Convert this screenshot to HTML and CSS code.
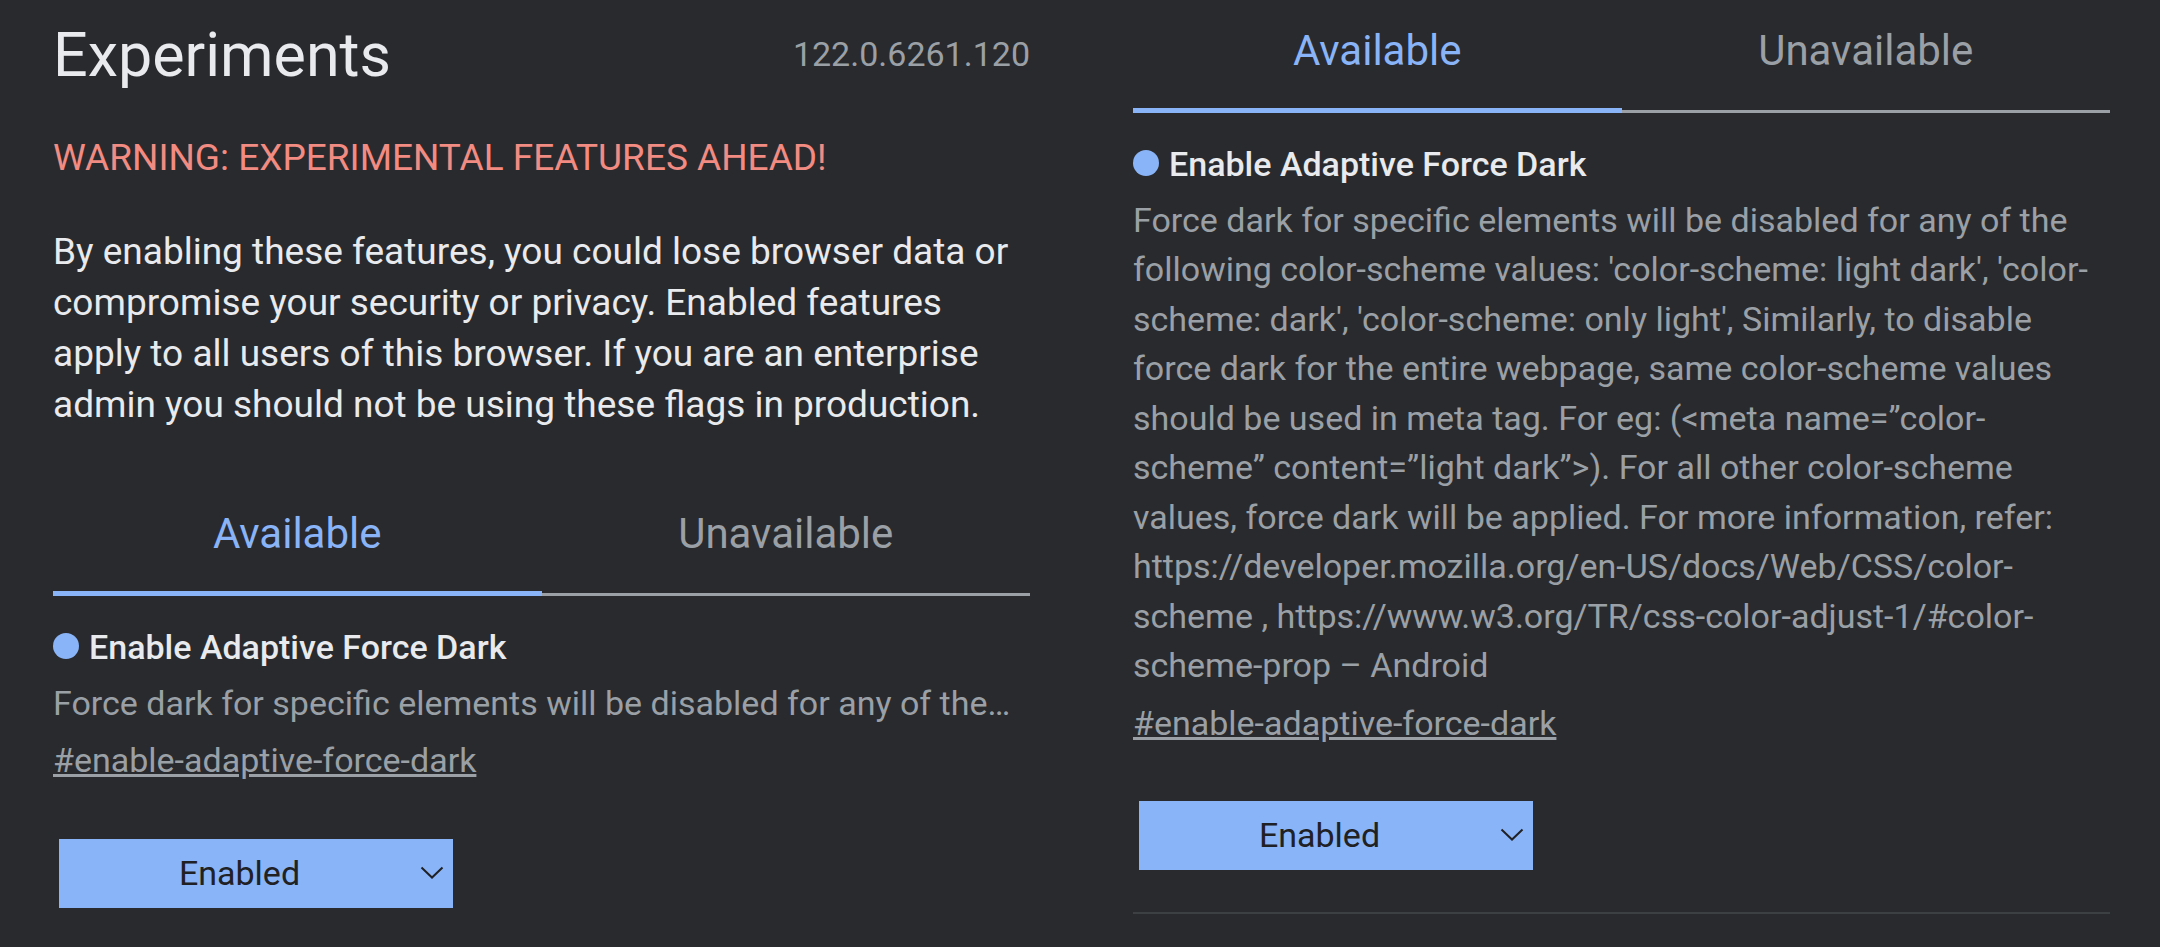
FILE: index.html
```html
<!DOCTYPE html>
<html lang="en">
<head>
<meta charset="utf-8">
<meta name="viewport" content="width=device-width, initial-scale=1">
<title>Experiments</title>
<link rel="stylesheet" href="styles.css">
</head>
<body>
<main class="screens">
  <section class="screen">
    <header class="header">
      <h1 class="title">Experiments</h1>
      <span class="version">122.0.6261.120</span>
    </header>
    <p class="warning">WARNING: EXPERIMENTAL FEATURES AHEAD!</p>
    <p class="blurb">By enabling these features, you could lose browser data or compromise your security or privacy. Enabled features apply to all users of this browser. If you are an enterprise admin you should not be using these flags in production.</p>
    <div class="tabs" role="tablist">
      <button class="tab tab-selected" type="button" role="tab" aria-selected="true">Available</button>
      <button class="tab" type="button" role="tab" aria-selected="false">Unavailable</button>
    </div>
    <article class="experiment">
      <h2 class="experiment-name"><span class="dot"></span><label for="flag-collapsed">Enable Adaptive Force Dark</label></h2>
      <p class="description">Force dark for specific elements will be disabled for any of the…</p>
      <a class="permalink" href="#enable-adaptive-force-dark">#enable-adaptive-force-dark</a>
      <div class="picker">
        <select class="picker-select" id="flag-collapsed">
          <option>Default</option>
          <option selected>Enabled</option>
          <option>Disabled</option>
        </select>
        <svg class="chevron" viewBox="0 0 24 14" aria-hidden="true"><path d="M1.500 1.500 12 11.500 22.500 1.500"/></svg>
      </div>
    </article>
  </section>

  <section class="screen">
    <div class="tabs" role="tablist">
      <button class="tab tab-selected" type="button" role="tab" aria-selected="true">Available</button>
      <button class="tab" type="button" role="tab" aria-selected="false">Unavailable</button>
    </div>
    <article class="experiment experiment-divided">
      <h2 class="experiment-name"><span class="dot"></span><label for="flag-expanded">Enable Adaptive Force Dark</label></h2>
      <p class="description">Force dark for specific elements will be disabled for any of the following color-scheme values: 'color-scheme: light dark', 'color-scheme: dark', 'color-scheme: only light', Similarly, to disable force dark for the entire webpage, same color-scheme values should be used in meta tag. For eg: (&lt;meta name=”color-scheme” content=”light dark”&gt;). For all other color-scheme values, force dark will be applied. For more information, refer: https://developer.mozilla.org/en-US/docs/Web/CSS/color-scheme , https://www.w3.org/TR/css-color-adjust-1/#color-scheme-prop – Android</p>
      <a class="permalink" href="#enable-adaptive-force-dark">#enable-adaptive-force-dark</a>
      <div class="picker">
        <select class="picker-select" id="flag-expanded">
          <option>Default</option>
          <option selected>Enabled</option>
          <option>Disabled</option>
        </select>
        <svg class="chevron" viewBox="0 0 24 14" aria-hidden="true"><path d="M1.500 1.500 12 11.500 22.500 1.500"/></svg>
      </div>
    </article>
  </section>
</main>
</body>
</html>
```
FILE: styles.css
```css
* {
  box-sizing: border-box;
}

body {
  margin: 0;
  background: #292a2d;
  color: #e8eaed;
  font-family: Roboto, "Liberation Sans", sans-serif;
  font-size: 34px;
  line-height: 1.455;
}

h1,
h2,
p {
  margin: 0;
  font-weight: 400;
}

.screens {
  display: grid;
  grid-template-columns: 1fr 1fr;
}

.screen {
  min-width: 0;
  padding: 0 50px 0 53px;
}

.header {
  display: flex;
  align-items: center;
  justify-content: space-between;
  padding-top: 20px;
}

.title {
  font-size: 61px;
  line-height: 70px;
}

.version {
  color: #9aa0a6;
}

.warning,
.blurb {
  font-size: 37px;
  line-height: 51px;
}

.warning {
  margin: 42px 0 43px;
  color: #f28b82;
}

.blurb {
  margin-bottom: 53px;
}

.tabs {
  display: grid;
  grid-template-columns: 1fr 1fr;
}

.tab {
  padding: 26px 0 34px;
  border: 0;
  border-bottom: 3px solid #9aa0a6;
  background: none;
  color: #9aa0a6;
  font: inherit;
  font-size: 42px;
  line-height: 50px;
}

.tab-selected {
  padding-bottom: 32px;
  border-bottom: 5px solid #8ab4f8;
  color: #8ab4f8;
}

.experiment {
  display: flex;
  flex-direction: column;
  align-items: flex-start;
  gap: 8px;
  padding: 27px 0 42px;
}

.experiment-divided {
  border-bottom: 2px solid #3c4043;
}

.experiment-name {
  display: flex;
  align-items: center;
  gap: 10px;
  font-size: 34px;
  font-weight: 500;
  line-height: 48px;
}

.dot {
  width: 26px;
  height: 26px;
  margin-bottom: 2px;
  border-radius: 50%;
  background: #8ab4f8;
}

.description {
  color: #9aa0a6;
}

.permalink {
  color: #9aa0a6;
}

.picker {
  position: relative;
  width: 394px;
  margin: 45px 0 0 6px;
}

.picker-select {
  display: block;
  width: 100%;
  height: 69px;
  padding: 0 33px 0 0;
  border: 0;
  border-radius: 0;
  appearance: none;
  background: #8ab4f8;
  color: #202124;
  font: inherit;
  text-align: center;
  text-align-last: center;
}

.chevron {
  position: absolute;
  top: 27px;
  right: 9px;
  width: 24px;
  height: 14px;
  fill: none;
  stroke: #202124;
  stroke-width: 2;
  pointer-events: none;
}
```
